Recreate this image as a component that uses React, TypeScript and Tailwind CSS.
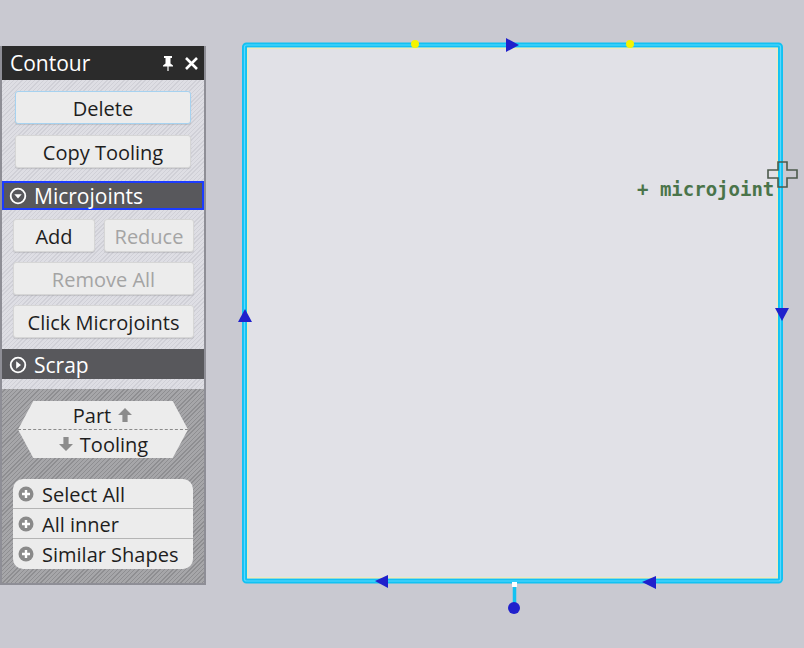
import { FC } from "react";

const light =
  "bg-[repeating-linear-gradient(135deg,#dedee4_0px,#dedee4_2px,#d0d0d7_2px,#d0d0d7_3px)]";
const dark =
  "bg-[repeating-linear-gradient(135deg,#a6a6a9_0px,#a6a6a9_2px,#8e8e91_2px,#8e8e91_3px)]";

const Btn: FC<{ label: string; disabled?: boolean; focused?: boolean; className?: string }> = ({
  label,
  disabled,
  focused,
  className = "",
}) => (
  <div
    className={`h-[33px] flex items-center justify-center rounded-[3px] bg-[#ececec] border text-[20px] shadow-[0_1px_1px_rgba(0,0,0,0.12)] ${
      focused ? "border-[#a6d2f0]" : "border-[#d6d6d6]"
    } ${disabled ? "text-[#a4a4a4]" : "text-[#1e1e1e]"} ${className}`}
  >
    <span className="leading-none mt-[2px]">{label}</span>
  </div>
);

const SectionHeader: FC<{ label: string; open?: boolean; focused?: boolean }> = ({
  label,
  open,
  focused,
}) => (
  <div
    className={`flex items-center gap-[7px] bg-[#58585c] text-white text-[21px] ${
      focused ? "h-[29px] border-2 border-[#1c3cff] pl-[5px]" : "h-[30px] pl-[7px]"
    }`}
  >
    <svg width="18" height="18" viewBox="0 0 18 18" className="mt-[1px]">
      <circle cx="9" cy="9" r="7.3" fill="none" stroke="#fff" strokeWidth="1.8" />
      {open ? (
        <path d="M5.3 7.2 L12.7 7.2 L9 11.6 Z" fill="#fff" />
      ) : (
        <path d="M7.2 5.2 L7.2 12.8 L12 9 Z" fill="#fff" />
      )}
    </svg>
    <span className="leading-none mt-[2px]">{label}</span>
  </div>
);

const Arrow: FC<{ down?: boolean }> = ({ down }) => (
  <svg width="16" height="16" viewBox="0 0 16 16" className={down ? "rotate-180" : ""}>
    <path d="M8 1 L15 8 H10.6 V15 H5.4 V8 H1 Z" fill="#8c8c8c" />
  </svg>
);

const PlusRow: FC<{ label: string; last?: boolean }> = ({ label, last }) => (
  <div
    className={`h-[30px] flex items-center gap-[8px] pl-[5px] text-[20px] text-[#1e1e1e] ${
      last ? "" : "border-b border-[#b4b4b4]"
    }`}
  >
    <svg width="16" height="16" viewBox="0 0 16 16">
      <circle cx="8" cy="8" r="7.5" fill="#8a8a8a" />
      <path d="M8 4 V12 M4 8 H12" stroke="#fff" strokeWidth="2.4" />
    </svg>
    <span className="leading-none mt-[2px]">{label}</span>
  </div>
);

const Panel: FC = () => (
  <div className="w-[206px] mt-[46px] self-start flex flex-col border-x-2 border-b-2 border-[#8e8e96] font-['Open_Sans',sans-serif]">
    {/* title bar */}
    <div className="h-[34px] bg-[#2b2b2b] flex items-center justify-between pl-[8px] pr-[5px] text-white">
      <span className="text-[21px] leading-none mt-[1px]">Contour</span>
      <div className="flex items-center gap-[9px]">
        <svg width="14" height="16" viewBox="0 0 14 16">
          <path d="M3 1 H11 V3 H9.5 V8.5 L12 10.5 V11.5 H7.6 V16 H6.4 V11.5 H2 V10.5 L4.5 8.5 V3 H3 Z" fill="#fff" />
        </svg>
        <svg width="15" height="15" viewBox="0 0 15 15">
          <path d="M2 2 L13 13 M13 2 L2 13" stroke="#fff" strokeWidth="2.6" />
        </svg>
      </div>
    </div>

    {/* body */}
    <div className={`${light} flex flex-col pt-[11px] pb-[11px]`}>
      <div className="flex flex-col gap-[11px] px-[13px]">
        <Btn label="Delete" focused />
        <Btn label="Copy Tooling" />
      </div>
      <div className="mt-[13px]">
        <SectionHeader label="Microjoints" open focused />
      </div>
      <div className="flex flex-col gap-[10px] mt-[9px] pl-[11px] pr-[10px]">
        <div className="flex gap-[9px]">
          <Btn label="Add" className="w-[82px]" />
          <Btn label="Reduce" disabled className="flex-1" />
        </div>
        <Btn label="Remove All" disabled />
        <Btn label="Click Microjoints" />
      </div>
    </div>

    <SectionHeader label="Scrap" />
    <div className={`${light} h-[10px]`} />

    <div className={`${dark} flex flex-col pt-[12px] pb-[14px]`}>
      <div className="ml-[16px] w-[170px] h-[57px] bg-[#ececec] flex flex-col [clip-path:polygon(9%_0,91%_0,100%_50%,91%_100%,9%_100%,0_50%)] text-[20px] text-[#1e1e1e]">
        <div className="h-[29px] flex items-center justify-center gap-[6px] border-b border-dashed border-[#8a8a8a]">
          <span className="leading-none mt-[2px]">Part</span>
          <Arrow />
        </div>
        <div className="flex-1 flex items-center justify-center gap-[6px]">
          <Arrow down />
          <span className="leading-none mt-[2px]">Tooling</span>
        </div>
      </div>

      <div className="mt-[21px] ml-[11px] w-[180px] rounded-[10px] bg-[#ececec] flex flex-col overflow-hidden">
        <PlusRow label="Select All" />
        <PlusRow label="All inner" />
        <PlusRow label="Similar Shapes" last />
      </div>
    </div>
  </div>
);

const Tri: FC<{ points: string }> = ({ points }) => <polygon points={points} fill="#2020cc" />;

const Drawing: FC = () => (
  <svg width="598" height="648" viewBox="0 0 598 648" className="block shrink-0">
    {/* part contour */}
    <rect x="38.5" y="45" width="536" height="536" rx="2" fill="#e1e1e7" stroke="#12c2f2" strokeWidth="5" />
    <rect x="38.5" y="45" width="536" height="536" rx="2" fill="none" stroke="#5ad8ff" strokeWidth="1.2" />
    <rect x="41.8" y="48.3" width="529.4" height="529.4" fill="none" stroke="#f2eeb0" strokeWidth="1" />

    {/* microjoints */}
    <circle cx="209" cy="44" r="4" fill="#f4f400" />
    <circle cx="424" cy="44" r="4" fill="#f4f400" />

    {/* direction arrows */}
    <Tri points="300,38 313,45 300,52" />
    <Tri points="39,309 32,322 46,322" />
    <Tri points="569,308 583,308 576,321" />
    <Tri points="169,581 182,575 182,588" />
    <Tri points="436,582 450,576 450,589" />

    {/* lead-in */}
    <rect x="306" y="582" width="5" height="5" fill="#ffffff" />
    <line x1="308.5" y1="587" x2="308.5" y2="603" stroke="#12c2f2" strokeWidth="3.5" />
    <circle cx="308" cy="608" r="6" fill="#2020cc" />

    {/* label */}
    <text
      x="431"
      y="196"
      fill="#4a744a"
      fontSize="19"
      fontWeight="bold"
      fontFamily="'DejaVu Sans Mono', 'Liberation Mono', monospace"
    >
      + microjoint
    </text>

    {/* cursor */}
    <path
      d="M572 162 H581 V170 H591 V178 H581 V187 H572 V178 H562 V170 H572 Z"
      fill="none"
      stroke="#4c5a4c"
      strokeWidth="1.6"
    />
  </svg>
);

export default function App() {
  return (
    <div className="w-[804px] h-[648px] bg-[#c9c9d1] flex overflow-hidden">
      <Panel />
      <Drawing />
    </div>
  );
}
